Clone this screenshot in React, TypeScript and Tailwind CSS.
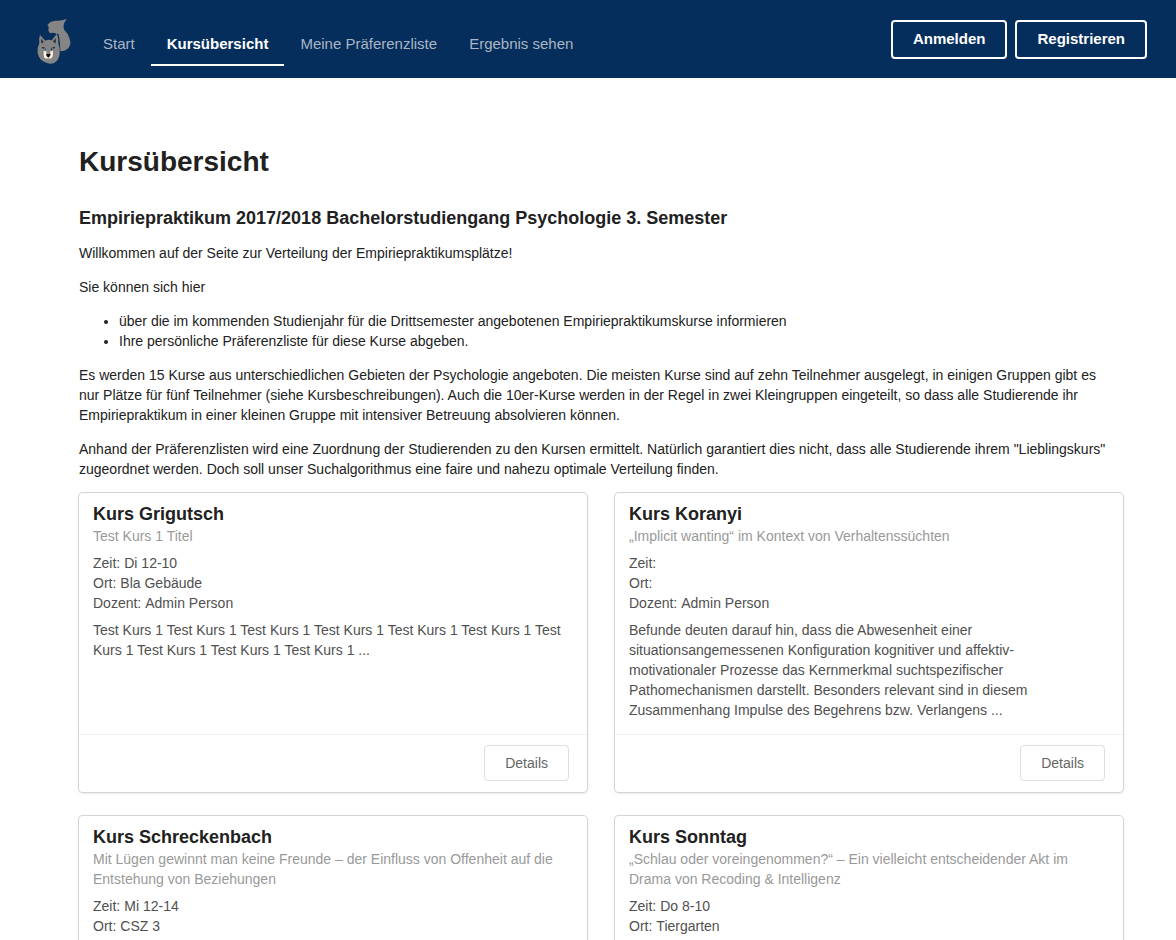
type Course = {
  name: string;
  title: string;
  time: string;
  place: string;
  lecturer: string;
  summary?: string;
};

const courses: Course[] = [
  {
    name: "Kurs Grigutsch",
    title: "Test Kurs 1 Titel",
    time: "Di 12-10",
    place: "Bla Gebäude",
    lecturer: "Admin Person",
    summary:
      "Test Kurs 1 Test Kurs 1 Test Kurs 1 Test Kurs 1 Test Kurs 1 Test Kurs 1 Test Kurs 1 Test Kurs 1 Test Kurs 1 Test Kurs 1 ...",
  },
  {
    name: "Kurs Koranyi",
    title: "„Implicit wanting“ im Kontext von Verhaltenssüchten",
    time: "",
    place: "",
    lecturer: "Admin Person",
    summary:
      "Befunde deuten darauf hin, dass die Abwesenheit einer situationsangemessenen Konfiguration kognitiver und affektiv-motivationaler Prozesse das Kernmerkmal suchtspezifischer Pathomechanismen darstellt. Besonders relevant sind in diesem Zusammenhang Impulse des Begehrens bzw. Verlangens ...",
  },
  {
    name: "Kurs Schreckenbach",
    title:
      "Mit Lügen gewinnt man keine Freunde – der Einfluss von Offenheit auf die Entstehung von Beziehungen",
    time: "Mi 12-14",
    place: "CSZ 3",
    lecturer: "Admin Person",
  },
  {
    name: "Kurs Sonntag",
    title:
      "„Schlau oder voreingenommen?“ – Ein vielleicht entscheidender Akt im Drama von Recoding & Intelligenz",
    time: "Do 8-10",
    place: "Tiergarten",
    lecturer: "Admin Person",
  },
];

const navItems = [
  { label: "Start", active: false },
  { label: "Kursübersicht", active: true },
  { label: "Meine Präferenzliste", active: false },
  { label: "Ergebnis sehen", active: false },
];

function Logo() {
  return (
    <svg viewBox="33 30 108 144" className="h-12 w-9" aria-hidden="true">
      <path
        d="M67 52Q74 39 92 38Q109 39 126 33Q117 42 116 51Q115 59 118 66Q130 77 134 92Q139 104 133 116Q126 128 106 130L105 107Q104 90 100 77L94 78Q86 72 76 76Q68 70 71 60Q71 54 67 52Z"
        fill="#858585"
      />
      <path
        d="M45 81L61 98Q70 93 80 97L95 78Q101 88 100 106Q106 119 104 138Q101 158 87 165Q74 170 60 163Q41 154 38 134Q36 119 43 106Q41 92 45 81Z"
        fill="#858585"
      />
      <path d="M48 92L56 101L51 107Q47 101 48 92ZM92 91L84 100L91 107Q94 100 92 91Z" fill="#303236" />
      <path d="M50 117Q58 115 63 124L61 127Q54 125 50 117ZM91 117Q83 115 77 124L79 127Q87 125 91 117Z" fill="#1d2227" />
      <circle cx="58" cy="123" r="2.5" fill="#8ab8d8" />
      <circle cx="83" cy="123" r="2.5" fill="#8ab8d8" />
      <path
        d="M56 128Q60 131 64 128L64 139Q70 136 76 139L76 128Q80 131 84 128Q85 142 81 149Q75 153 70 151Q64 153 58 149Q55 140 56 128Z"
        fill="#fff2e2"
      />
      <path d="M63 139Q70 135 77 139Q76 147 70 149Q64 147 63 139Z" fill="#080808" />
    </svg>
  );
}

function CourseCard({ course }: { course: Course }) {
  return (
    <article className="flex flex-col rounded bg-white shadow-[0_1px_3px_0_#d4d4d5,0_0_0_1px_#d4d4d5]">
      <div className="grow px-3.5 pt-2.5 pb-3.5 text-[#505050]">
        <h3 className="text-lg leading-[23px] font-bold text-[#212121]">{course.name}</h3>
        <p className="text-[#999999]">{course.title}</p>
        <dl className="mt-[7px]">
          <div className="flex gap-1">
            <dt>Zeit:</dt>
            <dd>{course.time}</dd>
          </div>
          <div className="flex gap-1">
            <dt>Ort:</dt>
            <dd>{course.place}</dd>
          </div>
          <div className="flex gap-1">
            <dt>Dozent:</dt>
            <dd>{course.lecturer}</dd>
          </div>
        </dl>
        {course.summary && <p className="mt-[7px] pr-2.5">{course.summary}</p>}
      </div>
      <div className="flex justify-end border-t border-[#f0f0f0] pt-2.5 pr-[18px] pb-[11px] pl-3.5">
        <button
          type="button"
          className="h-9 rounded border border-[#dededf] bg-white px-5 text-[#666666]"
        >
          Details
        </button>
      </div>
    </article>
  );
}

export default function App() {
  return (
    <div className="bg-white font-['Liberation_Sans',Arial,sans-serif] text-sm leading-5 text-[#212121]">
      <header className="flex h-[78px] items-start bg-[#052e5c] pr-[29px] pl-9 text-[15px]">
        <a href="#start" aria-label="Startseite" className="mt-[18px] mr-[15px]">
          <Logo />
        </a>
        <nav className="flex pt-[22px]">
          {navItems.map((item) => (
            <a
              key={item.label}
              href="#"
              aria-current={item.active ? "page" : undefined}
              className={
                item.active
                  ? "border-b-2 border-white px-4 pt-3 pb-2.5 font-bold text-white"
                  : "border-b-2 border-transparent px-4 pt-3 pb-2.5 text-[#aab6c4]"
              }
            >
              {item.label}
            </a>
          ))}
        </nav>
        <div className="ml-auto flex gap-2 pt-5">
          <button type="button" className="h-[39px] rounded border-2 border-white px-5 pb-0.5 font-bold text-white">
            Anmelden
          </button>
          <button type="button" className="h-[39px] rounded border-2 border-white px-5 pb-0.5 font-bold text-white">
            Registrieren
          </button>
        </div>
      </header>

      <main className="pt-[66px] pr-[53px] pb-12 pl-[79px]">
        <h1 className="text-[28px] leading-9 font-bold">Kursübersicht</h1>
        <h2 className="mt-[26px] text-lg leading-6 font-bold">
          Empiriepraktikum 2017/2018 Bachelorstudiengang Psychologie 3. Semester
        </h2>
        <div className="mt-[13px] flex flex-col gap-3.5 pr-1.5">
          <p>Willkommen auf der Seite zur Verteilung der Empiriepraktikumsplätze!</p>
          <p>Sie können sich hier</p>
          <ul className="list-disc pl-10">
            <li>über die im kommenden Studienjahr für die Drittsemester angebotenen Empiriepraktikumskurse informieren</li>
            <li>Ihre persönliche Präferenzliste für diese Kurse abgeben.</li>
          </ul>
          <p>
            Es werden 15 Kurse aus unterschiedlichen Gebieten der Psychologie angeboten. Die meisten Kurse sind auf zehn
            Teilnehmer ausgelegt, in einigen Gruppen gibt es nur Plätze für fünf Teilnehmer (siehe Kursbeschreibungen).
            Auch die 10er-Kurse werden in der Regel in zwei Kleingruppen eingeteilt, so dass alle Studierende ihr
            Empiriepraktikum in einer kleinen Gruppe mit intensiver Betreuung absolvieren können.
          </p>
          <p>
            Anhand der Präferenzlisten wird eine Zuordnung der Studierenden zu den Kursen ermittelt. Natürlich garantiert
            dies nicht, dass alle Studierende ihrem "Lieblingskurs" zugeordnet werden. Doch soll unser Suchalgorithmus
            eine faire und nahezu optimale Verteilung finden.
          </p>
        </div>
        <section aria-label="Kurse" className="mt-3.5 grid grid-cols-2 gap-x-7 gap-y-6">
          {courses.map((course) => (
            <CourseCard key={course.name} course={course} />
          ))}
        </section>
      </main>
    </div>
  );
}
